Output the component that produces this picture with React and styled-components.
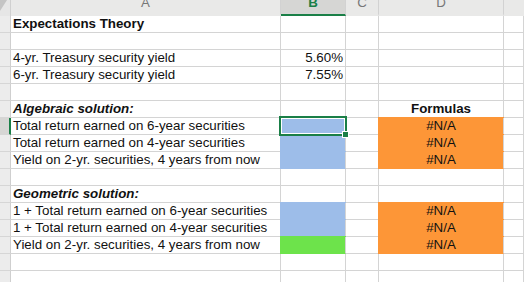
import React from "react";
import styled, { createGlobalStyle } from "styled-components";

const GlobalStyle = createGlobalStyle`
  html, body { margin: 0; padding: 0; background: #fff; }
  body { font-family: "Liberation Sans", Arial, sans-serif; overflow: hidden; }
`;

const GRID = "#d4d4d4";
const GREEN = "#1a7f47";
const FILLS = { blue: "#9dbde9", orange: "#fd9637", green: "#6de34b" };

const Sheet = styled.div`
  display: grid;
  grid-template-columns: 11px 270px 65px 33px 125px 1fr;
  grid-auto-rows: 17px;
  grid-template-rows: 16px;
  width: 524px;
  height: 282px;
  overflow: hidden;
`;

const Corner = styled.div`
  position: relative;
  background: #e6e6e6;
  border-right: 1px solid #d0d0d0;
  box-sizing: border-box;
  overflow: hidden;
  svg { display: block; }
`;

const ColHead = styled.div`
  box-sizing: border-box;
  background: ${(p) => (p.$active ? "#d6d6d4" : "#e9e9e8")};
  border-right: 1px solid ${(p) => (p.$last ? "transparent" : "#d2d2d2")};
  border-bottom: 2px solid ${(p) => (p.$active ? GREEN : "#e9e9e8")};
  color: ${(p) => (p.$active ? GREEN : "#777")};
  font-weight: ${(p) => (p.$active ? 700 : 400)};
  font-size: 13.3px;
  line-height: 13px;
  text-align: center;
  overflow: hidden;
  span { display: block; margin-top: -4px; }
`;

const RowHead = styled.div`
  box-sizing: border-box;
  background: ${(p) => (p.$active ? "#d6d6d4" : "#ececec")};
  border-bottom: 1px solid #d6d6d6;
  border-right: ${(p) => (p.$active ? `2px solid ${GREEN}` : "1px solid #cfcfcf")};
`;

const Cell = styled.div`
  position: relative;
  box-sizing: border-box;
  padding: 0 2px;
  border-right: 1px solid ${GRID};
  border-bottom: 1px solid ${(p) => (p.$fill ? FILLS[p.$fill] : GRID)};
  background: ${(p) => (p.$fill ? FILLS[p.$fill] : "#fff")};
  box-shadow: ${(p) =>
    p.$fill
      ? `-1px 0 0 ${FILLS[p.$fill]}, 0 -1px 0 ${FILLS[p.$fill]}, -1px -1px 0 ${FILLS[p.$fill]}`
      : "none"};
  font-size: 13.33px;
  line-height: 16px;
  color: #111;
  white-space: nowrap;
  text-align: ${(p) => p.$align || "left"};
  font-weight: ${(p) => (p.$bold ? 700 : 400)};
  font-style: ${(p) => (p.$italic ? "italic" : "normal")};
`;

const Selection = styled.div`
  position: absolute;
  left: -2px;
  right: -2px;
  top: -2px;
  bottom: -2px;
  border: 2px solid ${GREEN};
  box-shadow: inset 0 0 0 1px #fff;
  z-index: 2;
  pointer-events: none;
`;

const Handle = styled.div`
  position: absolute;
  right: -4px;
  bottom: -4px;
  width: 5px;
  height: 5px;
  background: ${GREEN};
  border: 1px solid #fff;
`;

const rows = [
  { a: "Expectations Theory", bold: true },
  {},
  { a: "4-yr. Treasury security yield", b: "5.60%" },
  { a: "6-yr. Treasury security yield", b: "7.55%" },
  {},
  { a: "Algebraic solution:", bold: true, italic: true, d: "Formulas", dBold: true },
  { a: "Total return earned on 6-year securities", bFill: "blue", d: "#N/A", dFill: "orange", selected: true },
  { a: "Total return earned on 4-year securities", bFill: "blue", d: "#N/A", dFill: "orange" },
  { a: "Yield on 2-yr. securities, 4 years from now", bFill: "blue", d: "#N/A", dFill: "orange" },
  {},
  { a: "Geometric solution:", bold: true, italic: true },
  { a: "1 + Total return earned on 6-year securities", bFill: "blue", d: "#N/A", dFill: "orange" },
  { a: "1 + Total return earned on 4-year securities", bFill: "blue", d: "#N/A", dFill: "orange" },
  { a: "Yield on 2-yr. securities, 4 years from now", bFill: "green", d: "#N/A", dFill: "orange" },
  {},
  {},
  {},
];

export default function App() {
  return (
    <>
      <GlobalStyle />
      <Sheet>
        <Corner>
          <svg width="10" height="15" viewBox="0 0 10 15">
            <polygon points="0,0 7,0 0,11" fill="#c4c4c4" />
          </svg>
        </Corner>
        <ColHead><span>A</span></ColHead>
        <ColHead $active><span>B</span></ColHead>
        <ColHead><span>C</span></ColHead>
        <ColHead><span>D</span></ColHead>
        <ColHead $last />

        {rows.map((r, i) => (
          <React.Fragment key={i}>
            <RowHead $active={r.selected} />
            <Cell $bold={r.bold} $italic={r.italic}>{r.a}</Cell>
            <Cell $fill={r.bFill} $align="right">
              {r.b}
              {r.selected && (
                <Selection>
                  <Handle />
                </Selection>
              )}
            </Cell>
            <Cell />
            <Cell $fill={r.dFill} $align="center" $bold={r.dBold}>{r.d}</Cell>
            <Cell />
          </React.Fragment>
        ))}
      </Sheet>
    </>
  );
}
